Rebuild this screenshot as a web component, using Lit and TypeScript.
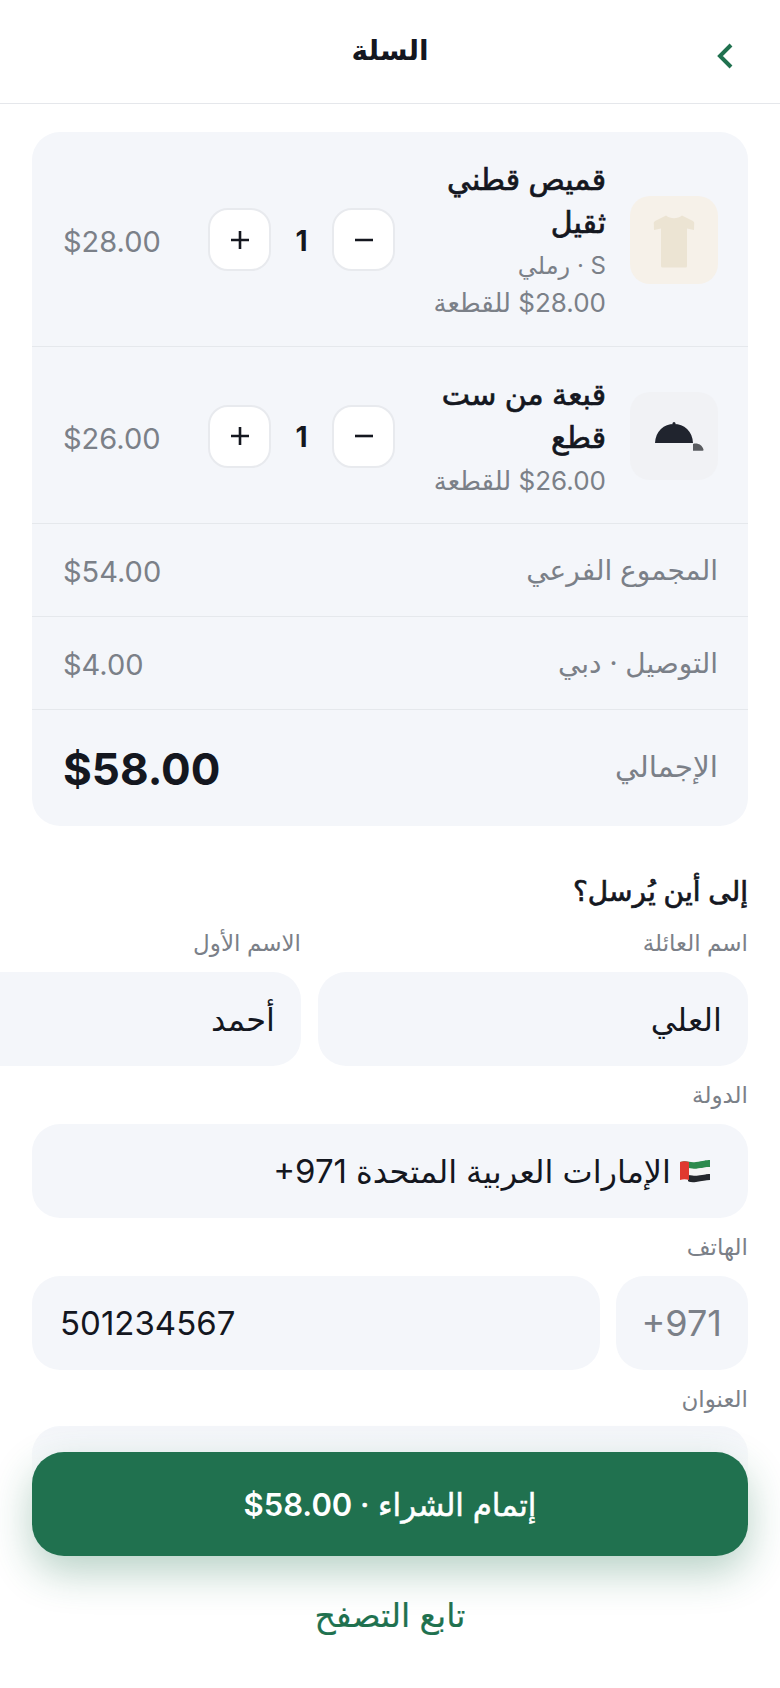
import { LitElement, html, css } from "lit";
import { customElement } from "lit/decorators.js";

const shirt = html`<svg width="88" height="88" viewBox="0 0 88 88"><path d="M36 19.500c4.500 3.500 11.500 3.500 16 0l10 5c1.500.8 2.300 1.500 2.200 3L64 34l-7-1.500V70a1.500 1.500 0 0 1-1.500 1.500h-23A1.500 1.500 0 0 1 31 70V32.500L24 34l-.2-6.500c-.1-1.500.7-2.200 2.200-3z" fill="#ece4d3"/></svg>`;
const cap = html`<svg width="88" height="88" viewBox="0 0 88 88"><circle cx="44" cy="31.500" r="1.500" fill="#20242e"/><path d="M25 51C25.500 39 34 32 44 32s18.500 7 19 19z" fill="#20242e"/><path d="M63 52c4-1.500 9 .5 10.500 5.500a1 1 0 0 1-1 1.200H63z" fill="#5a5c60"/></svg>`;
const flag = html`<svg class="flag" width="32" height="24" viewBox="0 0 32 24"><path d="M1 3c8-2 9 1 16 0s10-2 14-2v7c-4 0-8 1-14 2s-8-1-8-1z" fill="#2b8a4d"/><path d="M9 9c7 1 8 1 14 0s5-1 8-1v7c-4 0-8 1-14 2s-8-1-8-1z" fill="#f4f4f4"/><path d="M9 16c7 1 8 1 14 0s5-1 8-1v6c-4 0-8 1-14 2s-8-1-8-1z" fill="#24272c"/><path d="M1 3c3-1 6-1 9 0v18c-3-1-6-1-9 0z" fill="#e0392f"/></svg>`;
const minus = html`<svg width="20" height="20" viewBox="0 0 20 20"><path d="M1 10h18" stroke="#14171f" stroke-width="2.600"/></svg>`;
const plus = html`<svg width="20" height="20" viewBox="0 0 20 20"><path d="M1 10h18M10 1v18" stroke="#14171f" stroke-width="2.600"/></svg>`;

@customElement("app-root")
export class AppRoot extends LitElement {
  static styles = css`
    :host { display: block; width: 780px; height: 1688px; position: relative; overflow: hidden; background: #fff;
      font-family: Inter, "DejaVu Sans", "Noto Sans", sans-serif; color: #14171f; }
    .page { direction: rtl; }
    .hdr { height: 103px; border-bottom: 1px solid #e5e7eb; display: grid; grid-template-columns: 1fr auto 1fr; align-items: center; padding: 0 46px; }
    .hdr h1 { margin: 0 0 4px; font-size: 28px; font-weight: 700; line-height: 40px; }
    .back { justify-self: start; margin-top: 9px; display: flex; }
    .card { margin: 28px 32px 0; background: #f4f6fa; border-radius: 28px; overflow: hidden; }
    .item { display: flex; align-items: center; gap: 24px; padding: 26px 30px 24px 31px; border-bottom: 1px solid #e5e8ec; }
    .item.first { padding-bottom: 25px; }
    .thumb { width: 88px; height: 88px; border-radius: 20px; flex: none; }
    .thumb.t { background: #f6f1e9; }
    .thumb.c { background: #f1f2f5; }
    .info { flex: 1; min-width: 0; }
    .name { font-size: 30px; font-weight: 400; -webkit-text-stroke: 0.7px #14171f; line-height: 43px; margin-bottom: 3px; }
    .sub { font-size: 26px; color: #7b8088; line-height: 37px; }
    .sub.var { font-size: 24px; }
    .qty { display: flex; align-items: center; flex: none; }
    .qb { width: 63px; height: 63px; box-sizing: border-box; background: #fff; border: 2px solid #e8eaee; border-radius: 20px; display: flex; align-items: center; justify-content: center; }
    .n { width: 61px; text-align: center; font-size: 28px; font-weight: 700; padding-top: 2px; }
    .price { font-size: 29px; color: #7b8088; flex: none; width: 100px; margin-inline-start: 21px; text-align: left; padding-top: 4px; }
    .row { display: flex; justify-content: space-between; align-items: center; padding: 0 30px 0 31px; height: 92px; border-bottom: 1px solid #e5e8ec; font-size: 28px; color: #7b8088; }
    .row .v { font-size: 29px; padding-top: 2px; }
    .row.total { height: 116px; border-bottom: 0; }
    .row .l { font-size: 29.500px; margin-bottom: 4px; }
    .row .grand { font-size: 44px; font-weight: 700; color: #14171f; padding-top: 2px; }
    .form { padding: 0 32px; margin-top: 45px; }
    h2 { margin: 0 0 3px; font-size: 28px; font-weight: 400; -webkit-text-stroke: 0.7px #14171f; line-height: 40px; }
    label { display: block; font-size: 23px; color: #7b8088; line-height: 32px; margin: 13px 0 13px; }
    label.addr { margin-bottom: 11px; }
    .two { display: flex; gap: 17px; width: 847px; margin-inline-end: -131px; }
    .two > div { width: 430px; flex: none; }
    .inp { height: 94px; box-sizing: border-box; background: #f4f6fa; border-radius: 28px; padding: 0 26px 0 28px; display: flex; align-items: center; font-size: 32px; }
    .inp bdi { font-size: 33px; }
    .flag { margin-inline-start: 11px; margin-inline-end: 8px; }
    .phone { display: flex; gap: 16px; }
    .cc { width: 132px; flex: none; color: #7b8088; }
    .inp.cc bdi { font-size: 36px; }
    .ph { flex: 1; justify-content: flex-end; }
    .bar { position: absolute; left: 0; right: 0; bottom: 0; direction: rtl; padding: 24px 32px 0; height: 260px; box-sizing: border-box; background: linear-gradient(rgba(255,255,255,0), #fff 24%); display: flex; flex-direction: column; align-items: stretch; }
    .cta { height: 104px; background: #20714f; color: #fff; border-radius: 32px; display: flex; align-items: center; justify-content: center; gap: 8px; font-size: 31px; -webkit-text-stroke: 0.5px #fff; box-shadow: 0 16px 40px rgba(32,113,79,.32); }
    .cta bdi { font-weight: 600; -webkit-text-stroke: 0; }
    .link { text-align: center; margin-top: 39px; color: #20714f; font-size: 33px; -webkit-text-stroke: 0.2px #20714f; }
  `;

  private item(name: string, subs: string[], price: string, first: boolean, img: unknown, cls: string) {
    return html`<div class="item ${first ? "first" : ""}">
      <div class="thumb ${cls}">${img}</div>
      <div class="info"><div class="name">${name}</div>${subs.map((s) => html`<div class="sub ${s.startsWith("S") ? "var" : ""}">${s}</div>`)}</div>
      <div class="qty"><div class="qb">${minus}</div><div class="n">1</div><div class="qb">${plus}</div></div>
      <div class="price"><bdi dir="ltr">${price}</bdi></div>
    </div>`;
  }

  render() {
    return html`<div class="page">
      <div class="hdr"><span class="back"><svg width="18" height="26" viewBox="0 0 18 26"><path d="M15 2 4 13 15 24" fill="none" stroke="#20714f" stroke-width="4"/></svg></span><h1>السلة</h1><span></span></div>
      <div class="card">
        ${this.item("قميص قطني ثقيل", ["S · رملي", "$28.00 للقطعة"], "$28.00", true, shirt, "t")}
        ${this.item("قبعة من ست قطع", ["$26.00 للقطعة"], "$26.00", false, cap, "c")}
        <div class="row"><span>المجموع الفرعي</span><span class="v">$54.00</span></div>
        <div class="row"><span>التوصيل · دبي</span><span class="v">$4.00</span></div>
        <div class="row total"><span class="l">الإجمالي</span><span class="grand">$58.00</span></div>
      </div>
      <div class="form">
        <h2>إلى أين يُرسل؟</h2>
        <div class="two">
          <div><label>اسم العائلة</label><div class="inp">العلي</div></div>
          <div><label>الاسم الأول</label><div class="inp">أحمد</div></div>
        </div>
        <label>الدولة</label>
        <div class="inp">${flag}الإمارات العربية المتحدة&nbsp;<bdi dir="ltr">+971</bdi></div>
        <label>الهاتف</label>
        <div class="phone"><div class="inp cc"><bdi dir="ltr">+971</bdi></div><div class="inp ph"><bdi dir="ltr">501234567</bdi></div></div>
        <label class="addr">العنوان</label>
        <div class="inp"></div>
      </div>
      <div class="bar">
        <div class="cta"><span>إتمام الشراء ·</span><bdi dir="ltr">$58.00</bdi></div>
        <div class="link">تابع التصفح</div>
      </div>
    </div>`;
  }
}
